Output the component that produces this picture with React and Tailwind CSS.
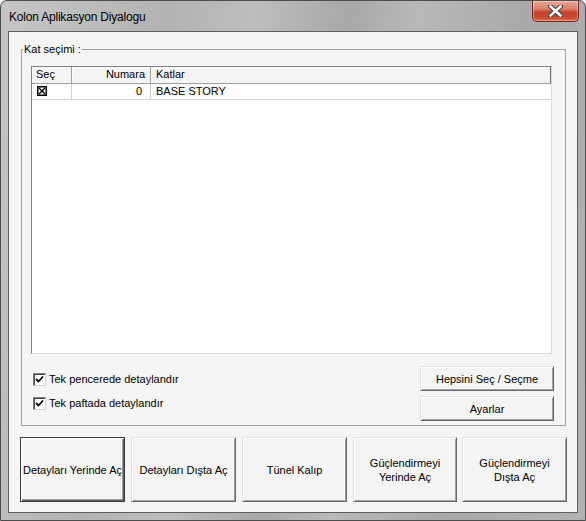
const font = { fontFamily: '"Liberation Sans", Arial, sans-serif' };

const bottomButtons = [
    { label: "Detayları Yerinde Aç", w: "w-[105px]", ml: "ml-0", isDefault: true },
    { label: "Detayları Dışta Aç", w: "w-[105px]", ml: "ml-[6px]" },
    { label: "Tünel Kalıp", w: "w-[105px]", ml: "ml-[6px]" },
    { label: "Güçlendirmeyi\nYerinde Aç", w: "w-[104px]", ml: "ml-[6px]" },
    { label: "Güçlendirmeyi\nDışta Aç", w: "w-[105px]", ml: "ml-[5px]" },
];

const CheckMark = () => (
    <svg width="9" height="9" viewBox="0 0 9 9">
        <path d="M1 4 L3.5 6.5 L8 1.5" fill="none" stroke="#000" strokeWidth="1.8" />
    </svg>
);

const Checkbox = ({ label }) => (
    <label className="flex items-center h-[13px]">
        <span className="w-[13px] h-[13px] flex items-center justify-center bg-white border border-[#808080] border-r-[#d4d4d4] border-b-[#d4d4d4] shadow-[inset_1px_1px_0_#404040]">
            <CheckMark />
        </span>
        <span className="ml-[3px] text-[11px] text-black leading-none">{label}</span>
    </label>
);

const WinButton = ({ children, className = "", isDefault }) => (
    <button
        className={`${className} flex items-center justify-center bg-[#f4f4f4] text-[11px] text-black leading-[14px] whitespace-pre-line text-center
      ${isDefault
                ? "border border-[#3a3a3a] shadow-[inset_1px_1px_0_#ffffff,inset_-1px_-1px_0_#5c5c5c,inset_-2px_-2px_0_#a0a0a0]"
                : "border border-[#e2e2e2] border-r-[#696969] border-b-[#696969] shadow-[inset_1px_1px_0_#ffffff,inset_-1px_-1px_0_#a0a0a0]"
            }`}
    >
        {children}
    </button>
);

const CloseButton = () => (
    <div className="w-[47px] h-[21px] rounded-b-[5px] border border-t-0 border-[#6e2a1c] bg-[linear-gradient(180deg,#e8aa98_0%,#d8806a_40%,#c5442b_55%,#c9492f_80%,#d9694e_100%)] shadow-[inset_0_0_0_1px_rgba(255,255,255,0.35)] flex items-center justify-center">
        <svg width="15" height="12" viewBox="0 0 15 12">
            <path d="M2 1 L13 11 M13 1 L2 11" stroke="#3d3d3d" strokeWidth="4.6" strokeLinecap="square" />
            <path d="M2.5 1.5 L12.5 10.5 M12.5 1.5 L2.5 10.5" stroke="#ffffff" strokeWidth="2.6" strokeLinecap="square" />
        </svg>
    </div>
);

const BoxX = () => (
    <svg width="10" height="10" viewBox="0 0 10 10">
        <rect x="0.75" y="0.75" width="8.5" height="8.5" fill="#fff" stroke="#000" strokeWidth="1.5" />
        <path d="M2 2 L8 8 M8 2 L2 8" stroke="#000" strokeWidth="1.4" />
    </svg>
);

export default function App() {
    return (
        <div className="w-[586px] h-[521px] bg-[#f0f0f0]" style={font}>
            <div className="w-[586px] h-[521px] flex flex-col rounded-t-[7px] border border-[#4d4d4d] bg-[linear-gradient(100deg,#c6c6c6_0%,#b3b3b3_25%,#bdbdbd_38%,#a8a8a8_52%,#b9b9b9_62%,#a9a9a9_78%,#b2b2b2_100%)] overflow-hidden">
                {/* Title bar */}
                <div className="h-[30px] flex items-start justify-between shrink-0">
                    <span className="ml-[8px] mt-[9px] text-[12px] text-black leading-[14px] tracking-[-0.2px]">
                        Kolon Aplikasyon Diyalogu
                    </span>
                    <div className="mr-[6px]">
                        <CloseButton />
                    </div>
                </div>

                {/* Client area */}
                <div className="mx-[7px] mb-[7px] flex-1 border border-[#5f5f5f] bg-[#f5f5f5] flex flex-col">
                    {/* Group box */}
                    <div className="relative ml-[12px] mt-[17px] w-[545px] h-[377px] border border-[#a0a0a0] flex flex-col">
                        <span className="absolute -top-[7px] left-[1px] px-[1px] bg-[#f5f5f5] text-[11px] leading-[13px] text-black">
                            Kat seçimi :
                        </span>

                        {/* List view */}
                        <div className="ml-[9px] mt-[16px] w-[521px] h-[288px] bg-white border border-[#828282] border-r-[#dcdcdc] border-b-[#dcdcdc] flex flex-col">
                            <div className="flex h-[17px] bg-[#f4f4f4] text-[11px] leading-[15px] text-black">
                                <div className="w-[40px] pl-[4px] border-r border-b border-[#a0a0a0] shadow-[inset_1px_1px_0_#ffffff]">Seç</div>
                                <div className="w-[79px] pr-[5px] text-right border-r border-b border-[#a0a0a0] shadow-[inset_1px_1px_0_#ffffff]">Numara</div>
                                <div className="flex-1 pl-[5px] border-r border-b border-[#6d6d6d] border-b-[#a0a0a0] shadow-[inset_1px_1px_0_#ffffff]">Katlar</div>
                            </div>
                            <div className="flex h-[16px] text-[11px] leading-[15px] text-black border-b border-[#d0d0d0]">
                                <div className="w-[40px] pl-[5px] pt-[2px] border-r border-[#d0d0d0]">
                                    <BoxX />
                                </div>
                                <div className="w-[79px] pr-[8px] text-right border-r border-[#d0d0d0]">0</div>
                                <div className="flex-1 pl-[5px]">BASE STORY</div>
                            </div>
                        </div>

                        {/* Options row */}
                        <div className="flex justify-between mt-[12px] ml-[11px] mr-[11px]">
                            <div className="flex flex-col gap-[11px] pt-[7px]">
                                <Checkbox label="Tek pencerede detaylandır" />
                                <Checkbox label="Tek paftada detaylandır" />
                            </div>
                            <div className="flex flex-col gap-[5px]">
                                <WinButton className="w-[134px] h-[25px]">Hepsini Seç / Seçme</WinButton>
                                <WinButton className="w-[134px] h-[25px]">Ayarlar</WinButton>
                            </div>
                        </div>
                    </div>

                    {/* Bottom buttons */}
                    <div className="flex ml-[11px] mt-[11px]">
                        {bottomButtons.map((b) => (
                            <WinButton key={b.label} className={`${b.w} ${b.ml} h-[65px]`} isDefault={b.isDefault}>
                                {b.label}
                            </WinButton>
                        ))}
                    </div>
                </div>
            </div>
        </div>
    );
}
